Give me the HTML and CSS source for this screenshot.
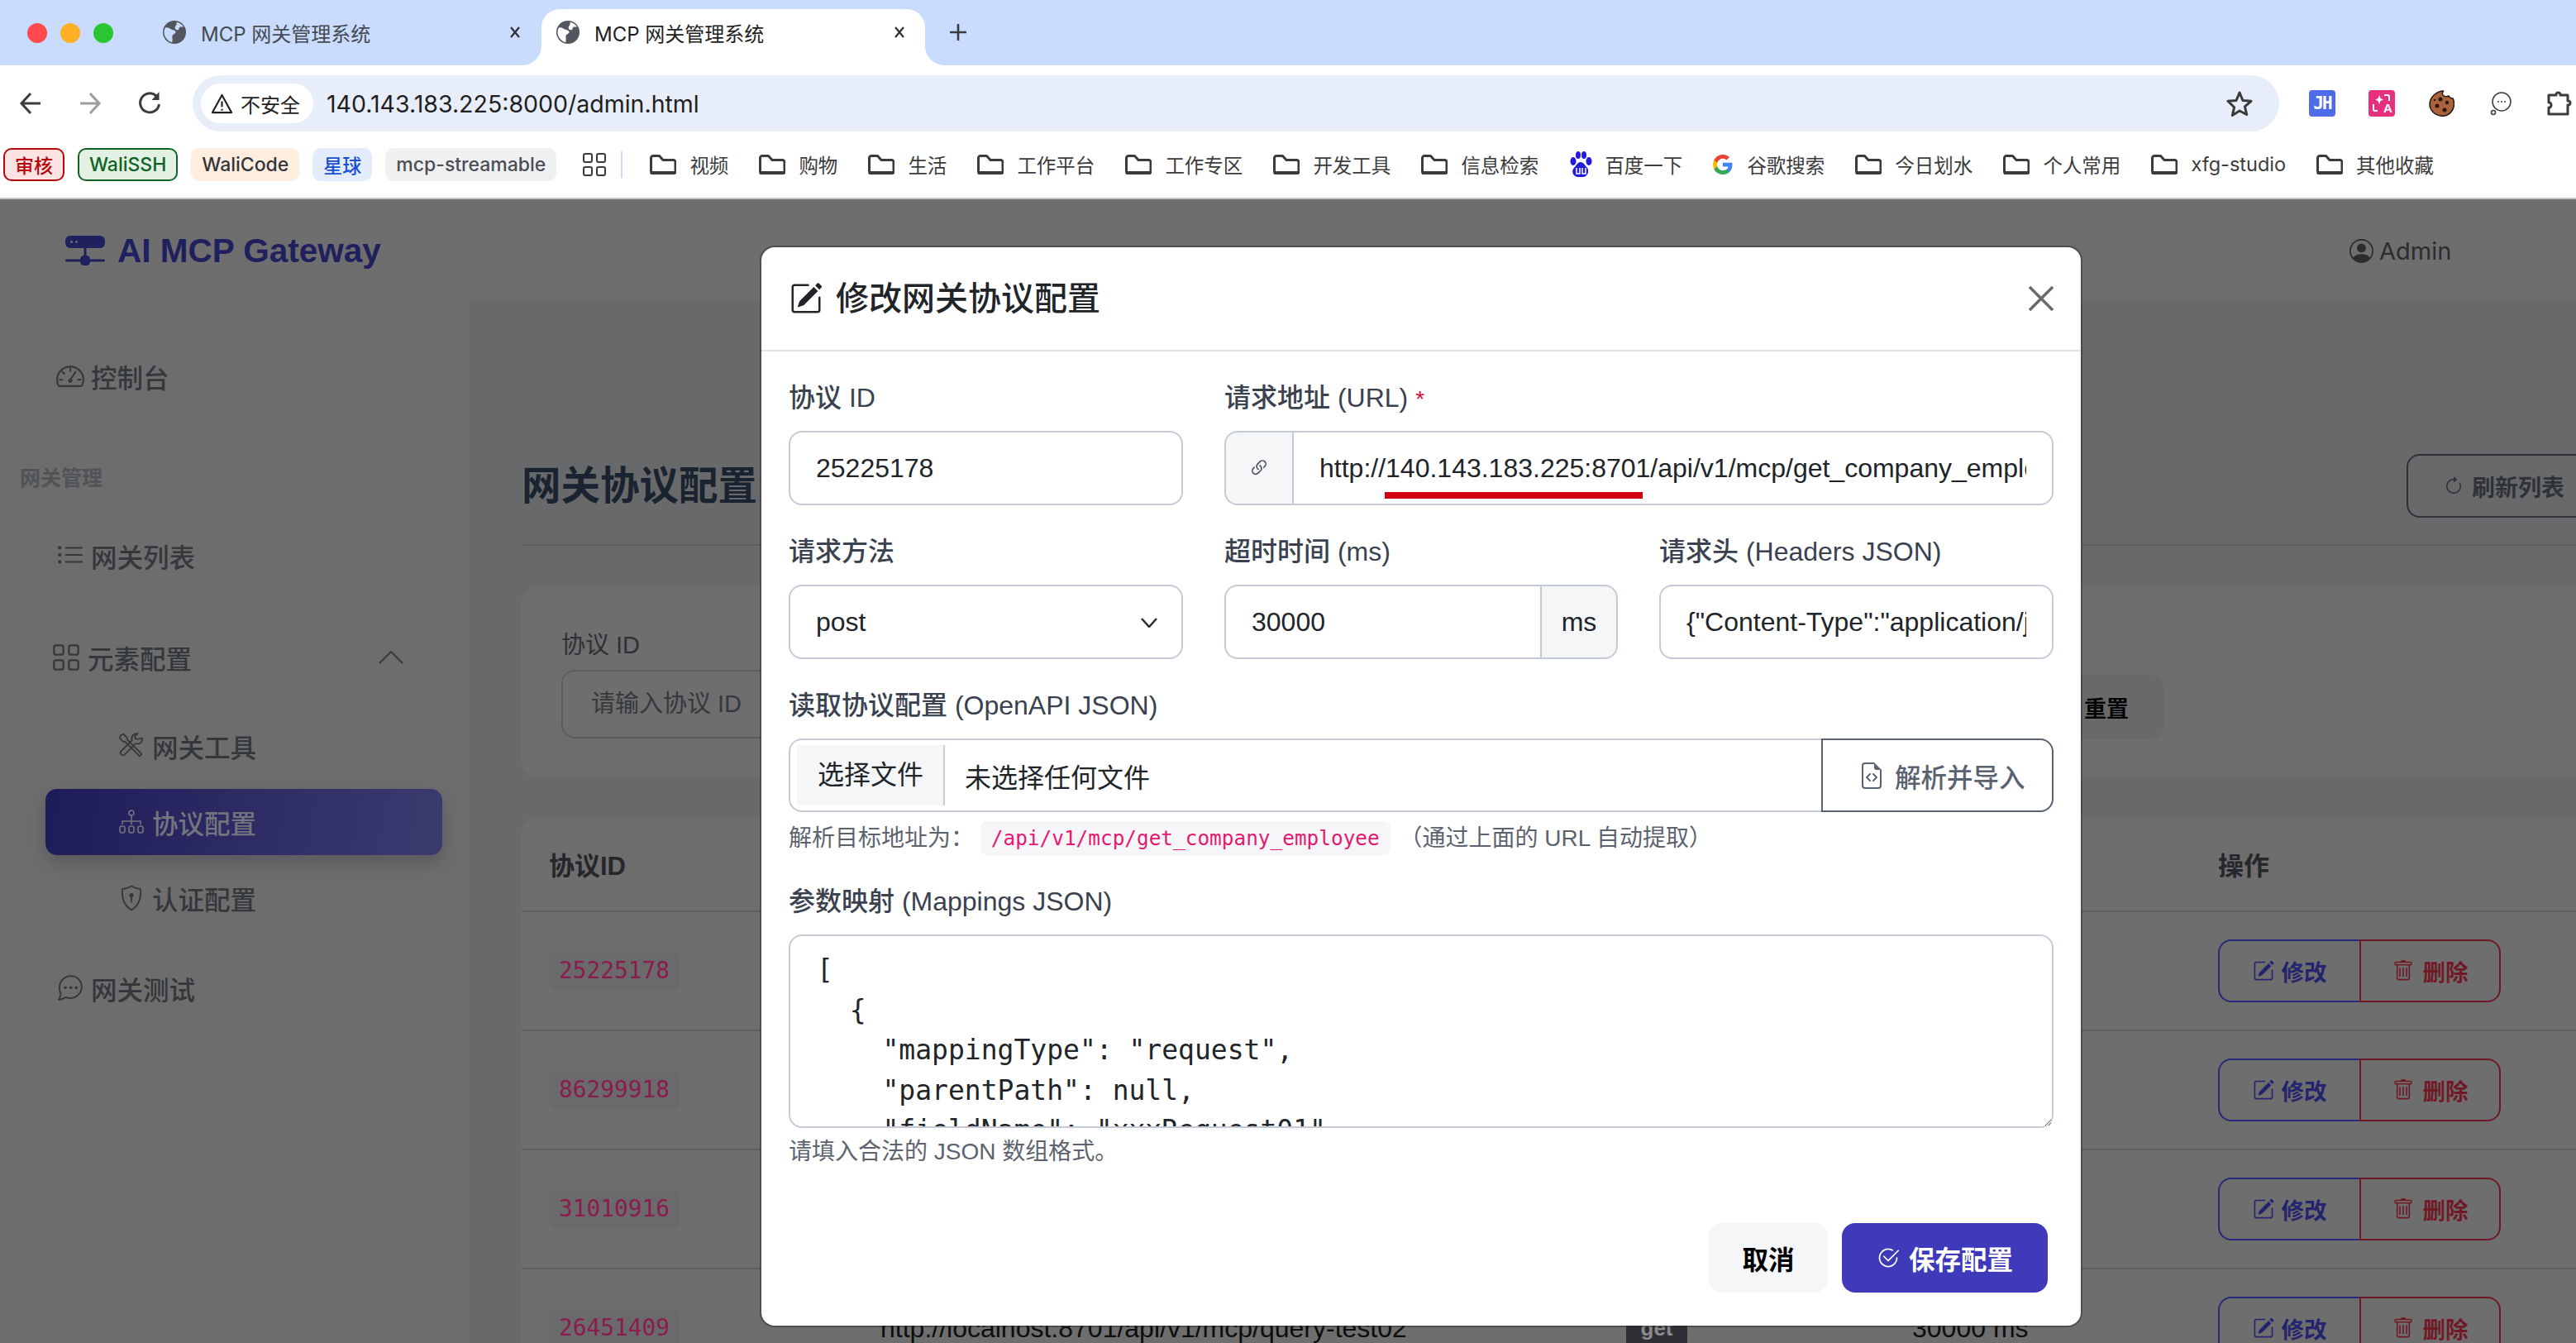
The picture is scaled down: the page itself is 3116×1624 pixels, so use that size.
FILE: index.html
```html
<!DOCTYPE html>
<html lang="zh-CN">
<head>
<meta charset="utf-8">
<title>MCP 网关管理系统</title>
<link rel="stylesheet" href="styles.css">
</head>
<body>
<svg class="defs" width="0" height="0" aria-hidden="true">
  <symbol id="i-pencil" viewBox="0 0 16 16"><path d="M15.502 1.94a.5.5 0 0 1 0 .706L14.459 3.69l-2-2L13.502.646a.5.5 0 0 1 .707 0l1.293 1.293zm-1.75 2.456-2-2L4.939 9.21a.5.5 0 0 0-.121.196l-.805 2.414a.25.25 0 0 0 .316.316l2.414-.805a.5.5 0 0 0 .196-.12l6.813-6.814z"/><path fill-rule="evenodd" d="M1 13.5A1.5 1.5 0 0 0 2.5 15h11a1.5 1.5 0 0 0 1.5-1.5v-6a.5.5 0 0 0-1 0v6a.5.5 0 0 1-.5.5h-11a.5.5 0 0 1-.5-.5v-11a.5.5 0 0 1 .5-.5H9a.5.5 0 0 0 0-1H2.5A1.5 1.5 0 0 0 1 2.5v11z"/></symbol>
  <symbol id="i-trash" viewBox="0 0 16 16"><path d="M5.5 5.5A.5.5 0 0 1 6 6v6a.5.5 0 0 1-1 0V6a.5.5 0 0 1 .5-.5zm2.5 0a.5.5 0 0 1 .5.5v6a.5.5 0 0 1-1 0V6a.5.5 0 0 1 .5-.5zm3 .5a.5.5 0 0 0-1 0v6a.5.5 0 0 0 1 0V6z"/><path fill-rule="evenodd" d="M14.5 3a1 1 0 0 1-1 1H13v9a2 2 0 0 1-2 2H5a2 2 0 0 1-2-2V4h-.5a1 1 0 0 1-1-1V2a1 1 0 0 1 1-1H6a1 1 0 0 1 1-1h2a1 1 0 0 1 1 1h3.5a1 1 0 0 1 1 1v1zM4.118 4 4 4.059V13a1 1 0 0 0 1 1h6a1 1 0 0 0 1-1V4.059L11.882 4H4.118zM2.5 3V2h11v1h-11z"/></symbol>
  <symbol id="i-check" viewBox="0 0 16 16"><path d="M2.5 8a5.5 5.5 0 0 1 8.25-4.764.5.5 0 0 0 .5-.866A6.5 6.5 0 1 0 14.5 8a.5.5 0 0 0-1 0 5.5 5.5 0 1 1-11 0z"/><path d="M15.354 3.354a.5.5 0 0 0-.708-.708L8 9.293 5.354 6.646a.5.5 0 1 0-.708.708l3 3a.5.5 0 0 0 .708 0l7-7z"/></symbol>
  <symbol id="i-refresh" viewBox="0 0 16 16"><path fill-rule="evenodd" d="M8 3a5 5 0 1 0 4.546 2.914.5.5 0 0 1 .908-.417A6 6 0 1 1 8 2v1z"/><path d="M8 4.466V.534a.25.25 0 0 1 .41-.192l2.36 1.966c.12.1.12.284 0 .384L8.41 4.658A.25.25 0 0 1 8 4.466z"/></symbol>
  <symbol id="i-person" viewBox="0 0 16 16"><path d="M11 6a3 3 0 1 1-6 0 3 3 0 0 1 6 0z"/><path fill-rule="evenodd" d="M0 8a8 8 0 1 1 16 0A8 8 0 0 1 0 8zm8-7a7 7 0 0 0-5.468 11.37C3.242 11.226 4.805 10 8 10s4.757 1.225 5.468 2.37A7 7 0 0 0 8 1z"/></symbol>
  <symbol id="i-list" viewBox="0 0 16 16"><path fill-rule="evenodd" d="M5 11.5a.5.5 0 0 1 .5-.5h9a.5.5 0 0 1 0 1h-9a.5.5 0 0 1-.5-.5zm0-4a.5.5 0 0 1 .5-.5h9a.5.5 0 0 1 0 1h-9a.5.5 0 0 1-.5-.5zm0-4a.5.5 0 0 1 .5-.5h9a.5.5 0 0 1 0 1h-9a.5.5 0 0 1-.5-.5zm-3 1a1 1 0 1 0 0-2 1 1 0 0 0 0 2zm0 4a1 1 0 1 0 0-2 1 1 0 0 0 0 2zm0 4a1 1 0 1 0 0-2 1 1 0 0 0 0 2z"/></symbol>
  <symbol id="i-grid" viewBox="0 0 16 16"><path d="M1 2.500A1.500 1.500 0 0 1 2.500 1h3A1.500 1.500 0 0 1 7 2.500v3A1.500 1.500 0 0 1 5.500 7h-3A1.500 1.500 0 0 1 1 5.500v-3zM2.500 2a.5.5 0 0 0-.5.5v3a.5.5 0 0 0 .5.5h3a.5.5 0 0 0 .5-.5v-3a.5.5 0 0 0-.5-.5h-3zm6.500.5A1.500 1.500 0 0 1 10.500 1h3A1.500 1.500 0 0 1 15 2.500v3A1.500 1.500 0 0 1 13.500 7h-3A1.500 1.500 0 0 1 9 5.500v-3zm1.500-.5a.5.5 0 0 0-.5.5v3a.5.5 0 0 0 .5.5h3a.5.5 0 0 0 .5-.5v-3a.5.5 0 0 0-.5-.5h-3zM1 10.500A1.500 1.500 0 0 1 2.500 9h3A1.500 1.500 0 0 1 7 10.500v3A1.500 1.500 0 0 1 5.500 15h-3A1.500 1.500 0 0 1 1 13.500v-3zm1.500-.5a.5.5 0 0 0-.5.5v3a.5.5 0 0 0 .5.5h3a.5.5 0 0 0 .5-.5v-3a.5.5 0 0 0-.5-.5h-3zm6.500.5A1.500 1.500 0 0 1 10.500 9h3a1.500 1.500 0 0 1 1.500 1.500v3a1.500 1.500 0 0 1-1.500 1.500h-3A1.500 1.500 0 0 1 9 13.500v-3zm1.500-.5a.5.5 0 0 0-.5.5v3a.5.5 0 0 0 .5.5h3a.5.5 0 0 0 .5-.5v-3a.5.5 0 0 0-.5-.5h-3z"/></symbol>
  <symbol id="i-link" viewBox="0 0 16 16"><path d="M4.715 6.542 3.343 7.914a3 3 0 1 0 4.243 4.243l1.828-1.829A3 3 0 0 0 8.586 5.500L8 6.086a1.002 1.002 0 0 0-.154.199 2 2 0 0 1 .861 3.337L6.880 11.450a2 2 0 1 1-2.830-2.830l.793-.792a4.018 4.018 0 0 1-.128-1.287z"/><path d="M6.586 4.672A3 3 0 0 0 7.414 9.500l.775-.776a2 2 0 0 1-.896-3.346L9.120 3.550a2 2 0 1 1 2.830 2.830l-.793.792c.112.420.155.855.128 1.287l1.372-1.372a3 3 0 1 0-4.243-4.243L6.586 4.672z"/></symbol>
  <symbol id="i-file" viewBox="0 0 16 16"><path d="M14 4.500V14a2 2 0 0 1-2 2H4a2 2 0 0 1-2-2V2a2 2 0 0 1 2-2h5.500L14 4.500zm-3 0A1.500 1.500 0 0 1 9.500 3V1H4a1 1 0 0 0-1 1v12a1 1 0 0 0 1 1h8a1 1 0 0 0 1-1V4.500h-2z"/><path d="M8.646 6.646a.5.5 0 0 1 .708 0l2 2a.5.5 0 0 1 0 .708l-2 2a.5.5 0 0 1-.708-.708L10.293 9 8.646 7.354a.5.5 0 0 1 0-.708zm-1.292 0a.5.5 0 0 0-.708 0l-2 2a.5.5 0 0 0 0 .708l2 2a.5.5 0 0 0 .708-.708L5.707 9l1.647-1.646a.5.5 0 0 0 0-.708z"/></symbol>
  <symbol id="i-logo" viewBox="0 0 16 16"><path d="M2 2a2 2 0 0 0-2 2v1a2 2 0 0 0 2 2h5.500v3A1.500 1.500 0 0 0 6 11.500H.5a.5.5 0 0 0 0 1H6A1.500 1.500 0 0 0 7.500 14h1a1.500 1.500 0 0 0 1.500-1.500h5.500a.5.5 0 0 0 0-1H10A1.500 1.500 0 0 0 8.500 10V7H14a2 2 0 0 0 2-2V4a2 2 0 0 0-2-2H2zm.5 3a.5.5 0 1 1 0-1 .5.5 0 0 1 0 1zm2 0a.5.5 0 1 1 0-1 .5.5 0 0 1 0 1z"/></symbol>
  <symbol id="i-speed" viewBox="0 0 16 16"><path d="M8 2.500a7.500 7.500 0 0 0-7.500 7.500c0 1.200.3 2.300.8 3.200.2.300.5.400.8.400h11.800c.3 0 .6-.1.8-.4.500-.9.800-2 .8-3.200A7.500 7.500 0 0 0 8 2.500z" fill="none" stroke="currentColor"/><path d="M8 10l3-4.500M8 3.500v1.500M3.500 5.500l1 1M2 10h1.500M12.500 10H14" fill="none" stroke="currentColor" stroke-linecap="round"/><circle cx="8" cy="10.500" r="1.200"/></symbol>
  <symbol id="i-tools" viewBox="0 0 16 16"><path d="M1.500 1.500l1.800-.6 2 2 .2 1.300 8.700 8.700-1.300 1.300-8.700-8.700-1.300-.2-2-2z" fill="none" stroke="currentColor" stroke-width=".9" stroke-linejoin="round"/><path d="M14.500 3.300a3 3 0 0 1-4 3.300L3.800 13.300a1.500 1.500 0 0 1-2.100-2.100L8.400 4.500a3 3 0 0 1 3.300-4L10 2.200l.4 1.400 1.400.4z" fill="none" stroke="currentColor" stroke-width=".9" stroke-linejoin="round"/></symbol>
  <symbol id="i-diagram" viewBox="0 0 16 16"><rect x="6.500" y="1" width="3" height="3" rx="1.500" fill="none" stroke="currentColor" stroke-width=".8"/><path d="M8 4v3M2.500 9.500V7.500h11v2M8 7.500v2" fill="none" stroke="currentColor" stroke-width=".8"/><rect x="1" y="10.500" width="3" height="4" rx="1.200" fill="none" stroke="currentColor" stroke-width=".8"/><rect x="6.500" y="10.500" width="3" height="4" rx="1.200" fill="none" stroke="currentColor" stroke-width=".8"/><rect x="12" y="10.500" width="3" height="4" rx="1.200" fill="none" stroke="currentColor" stroke-width=".8"/></symbol>
  <symbol id="i-shield" viewBox="0 0 16 16"><path d="M8 .8c1.800 1.100 3.600 1.600 5.500 1.800 .4 5-1 9.800-5.500 12.600C3.500 12.400 2.100 7.600 2.500 2.600 4.400 2.400 6.200 1.900 8 .8z" fill="none" stroke="currentColor" stroke-width=".9" stroke-linejoin="round"/><circle cx="8" cy="6.300" r="1.300"/><path d="M8 7v3.200" stroke="currentColor" stroke-width=".9" stroke-linecap="round"/></symbol>
  <symbol id="i-chat" viewBox="0 0 16 16"><path d="M8.500 1a6.700 6.700 0 0 0-6.700 6.700c0 1 .2 2 .7 2.900.3.500-.2 2.900-1.200 4 1.800-.1 3-.8 4.100-1.500 1 .4 2 .6 3.100.5a6.400 6.400 0 0 0 6-6.300A6.200 6.200 0 0 0 8.500 1z" fill="none" stroke="currentColor" stroke-width=".9" stroke-linejoin="round"/><circle cx="5.200" cy="7.700" r=".85"/><circle cx="8.300" cy="7.700" r=".85"/><circle cx="11.400" cy="7.700" r=".85"/></symbol>
  <symbol id="i-folder" viewBox="0 0 32 24"><path d="M1.500 4A2.500 2.500 0 0 1 4 1.500h7.500l4.500 5h12.500A2.500 2.500 0 0 1 31 9v11.500a2.500 2.500 0 0 1-2.500 2.500H4a2.500 2.500 0 0 1-2.500-2.500z" fill="none" stroke="currentColor" stroke-width="3" stroke-linejoin="round"/><path d="M2 20h28v3H2z"/></symbol>
  <symbol id="i-globe" viewBox="0 0 28 28"><circle cx="14" cy="14" r="14" fill="#51565f"/><path class="globe-land" d="M3 8.500c3-1 5 .6 7 1.800s5 1 5.500 3.200-3.500 2.500-4 4.800 .8 4-.3 8C5.500 24.500 1.500 19.500 1.500 14c0-2 .5-3.800 1.500-5.500z"/><path class="globe-land" d="M16.500 1.800c3.500.7 6.500 2.500 8.500 5.400-2.300.9-3.400-.2-4.700.8s-.3 3.300-2.500 3.300-3.400-1.300-3.100-3.300 2.800-2.600 1.800-6.200z"/></symbol>
</svg>

<div class="chrome">
  <div class="tabstrip">
    <div class="lights"><span class="light light-red"></span><span class="light light-amber"></span><span class="light light-green"></span></div>
    <div class="tab">
      <svg class="favicon"><use href="#i-globe"/></svg>
      <span class="tab-title">MCP 网关管理系统</span>
      <svg class="tab-close" viewBox="0 0 14 14"><path d="M2 1l10 12M12 1L2 13"/></svg>
    </div>
    <div class="tab tab-active">
      <svg class="favicon"><use href="#i-globe"/></svg>
      <span class="tab-title">MCP 网关管理系统</span>
      <svg class="tab-close" viewBox="0 0 14 14"><path d="M2 1l10 12M12 1L2 13"/></svg>
    </div>
    <svg class="tab-new" viewBox="0 0 22 22"><path d="M11 1v20M1 11h20"/></svg>
  </div>

  <div class="toolbar">
    <svg class="nav-btn" viewBox="0 0 28 32"><path d="M26 16H4M14 4L3 16l11 12"/></svg>
    <svg class="nav-btn nav-btn-off" viewBox="0 0 28 32"><path d="M2 16h22M14 4l11 12-11 12"/></svg>
    <svg class="nav-btn" viewBox="0 0 28 32"><path d="M22 7a11.500 11.500 0 1 0 3.500 10"/><path class="solid" d="M25.500 2v10h-9z"/></svg>
    <div class="omnibox">
      <div class="secure-chip">
        <svg class="warn" viewBox="0 0 28 28"><path d="M14 3l12 22H2z"/><path d="M14 11v7M14 20.500v2"/></svg>
        <span>不安全</span>
      </div>
      <span class="url-text">140.143.183.225:8000/admin.html</span>
      <svg class="star" viewBox="0 0 32 32"><path d="M16 3l4 9.500 10 .8-7.600 6.500 2.300 9.700L16 25l-8.700 5.500 2.300-9.700L2 13.300l10-.8z"/></svg>
    </div>
    <div class="extensions">
      <span class="ext ext-jh">JH</span>
      <svg class="ext" viewBox="0 0 32 32"><rect width="32" height="32" rx="4" fill="#e6307f"/><path d="M13 6l1.500 4L18 11.500 14.500 13 13 17l-1.500-4L8 11.500 11.500 10z" fill="#fff"/><path d="M6 17v6a2 2 0 0 0 2 2h3M19 6h4a2 2 0 0 1 2 2v5" fill="none" stroke="#fff" stroke-width="2"/><text class="ext-a" x="18" y="27">A</text></svg>
      <svg class="ext" viewBox="0 0 32 32"><path d="M19 1c-2 1-2 3-1 5 2 2 5 2 7 1 1 2 3 3 5 3 2 4 2 10-1 15-3 5-9 7-14 6C8 30 2 24 2 17 2 9 10 1 19 1z" fill="#a9623a" stroke="#241a12" stroke-width="1.500"/><circle cx="15" cy="11" r="2.500" fill="#241a12"/><circle cx="23" cy="15" r="2.200" fill="#241a12"/><circle cx="11" cy="19" r="2.500" fill="#241a12"/><circle cx="20" cy="24" r="2.500" fill="#241a12"/><circle cx="8" cy="12" r="1.200" fill="#241a12"/></svg>
      <svg class="ext" viewBox="0 0 32 32"><circle cx="17" cy="14" r="11" fill="none" stroke="#3c3c3c" stroke-width="1.500"/><circle cx="7" cy="27" r="2.500" fill="none" stroke="#3c3c3c" stroke-width="1.500"/><circle cx="13" cy="14" r="1" fill="#3c3c3c"/><circle cx="17" cy="14" r="1" fill="#3c3c3c"/><circle cx="21" cy="14" r="1" fill="#3c3c3c"/></svg>
      <svg class="ext" viewBox="0 0 32 32"><path d="M2 6h9c-1-4 6-4 5 0h9v7c4-1 4 6 0 5v11H2v-8c4 1 4-7 0-6z" fill="none" stroke="#3c3c3c" stroke-width="3" stroke-linejoin="round"/></svg>
    </div>
  </div>

  <div class="bookmarks">
    <span class="chip chip-red">审核</span>
    <span class="chip chip-green">WaliSSH</span>
    <span class="chip chip-orange">WaliCode</span>
    <span class="chip chip-blue">星球</span>
    <span class="chip chip-gray">mcp-streamable</span>
    <svg class="apps"><use href="#i-grid"/></svg>
    <span class="bm-divider"></span>
    <span class="bm"><svg class="folder"><use href="#i-folder"/></svg>视频</span>
    <span class="bm"><svg class="folder"><use href="#i-folder"/></svg>购物</span>
    <span class="bm"><svg class="folder"><use href="#i-folder"/></svg>生活</span>
    <span class="bm"><svg class="folder"><use href="#i-folder"/></svg>工作平台</span>
    <span class="bm"><svg class="folder"><use href="#i-folder"/></svg>工作专区</span>
    <span class="bm"><svg class="folder"><use href="#i-folder"/></svg>开发工具</span>
    <span class="bm"><svg class="folder"><use href="#i-folder"/></svg>信息检索</span>
    <span class="bm"><svg class="paw" viewBox="0 0 28 32"><ellipse cx="5" cy="12" rx="3.500" ry="5" fill="#2319dc"/><ellipse cx="11" cy="4.500" rx="3" ry="4.500" fill="#2319dc"/><ellipse cx="18" cy="4.500" rx="3" ry="4.500" fill="#2319dc"/><ellipse cx="24" cy="12" rx="3.500" ry="5" fill="#2319dc"/><path d="M14 13c4 0 5 4 8 7 3 4 0 11-5 11h-6c-6 0-9-7-5-11 3-3 4-7 8-7z" fill="#2319dc"/><path d="M9 20v7h4v-7M16 20v7h4v-7" fill="none" stroke="#fff" stroke-width="1.500"/></svg>百度一下</span>
    <span class="bm"><svg class="gicon" viewBox="0 0 24 24"><path d="M23.500 12.300c0-.9-.1-1.700-.2-2.500H12v4.700h6.500c-.3 1.500-1.100 2.800-2.400 3.600v3h3.900c2.300-2.100 3.500-5.200 3.500-8.800z" fill="#4285f4"/><path d="M12 24c3.200 0 6-1.100 8-2.900l-3.900-3c-1.100.7-2.500 1.200-4.100 1.200-3.100 0-5.800-2.100-6.700-5H1.300v3.100C3.300 21.300 7.300 24 12 24z" fill="#34a853"/><path d="M5.300 14.300c-.5-1.500-.5-3.100 0-4.600V6.600h-4c-1.700 3.300-1.700 7.500 0 10.800z" fill="#fbbc05"/><path d="M12 4.700c1.800 0 3.300.6 4.600 1.800l3.400-3.400C17.900 1.200 15.200 0 12 0 7.300 0 3.300 2.700 1.300 6.600l4 3.100c.9-2.900 3.600-5 6.700-5z" fill="#ea4335"/></svg>谷歌搜索</span>
    <span class="bm"><svg class="folder"><use href="#i-folder"/></svg>今日划水</span>
    <span class="bm"><svg class="folder"><use href="#i-folder"/></svg>个人常用</span>
    <span class="bm"><svg class="folder"><use href="#i-folder"/></svg>xfg-studio</span>
    <span class="bm"><svg class="folder"><use href="#i-folder"/></svg>其他收藏</span>
  </div>
</div>

<div class="page">
  <header class="topnav">
    <div class="brand"><svg class="brand-icon"><use href="#i-logo"/></svg><span>AI MCP Gateway</span></div>
    <div class="user"><svg class="user-icon"><use href="#i-person"/></svg><span>Admin</span></div>
  </header>

  <div class="workspace">
    <aside class="sidebar">
      <a class="side-item side-dash"><svg class="side-icon"><use href="#i-speed"/></svg>控制台</a>
      <div class="side-heading">网关管理</div>
      <a class="side-item side-list"><svg class="side-icon"><use href="#i-list"/></svg>网关列表</a>
      <a class="side-item side-group"><svg class="side-icon side-icon-lg"><use href="#i-grid"/></svg>元素配置
        <svg class="side-chevron" viewBox="0 0 30 16"><path d="M1 15L15 1l14 14"/></svg></a>
      <a class="side-sub side-sub-first"><svg class="sub-icon"><use href="#i-tools"/></svg>网关工具</a>
      <a class="side-sub side-active"><svg class="sub-icon"><use href="#i-diagram"/></svg>协议配置</a>
      <a class="side-sub"><svg class="sub-icon"><use href="#i-shield"/></svg>认证配置</a>
      <a class="side-item side-test"><svg class="side-icon"><use href="#i-chat"/></svg>网关测试</a>
    </aside>

    <main class="main">
      <div class="page-head">
        <h1 class="page-title">网关协议配置</h1>
        <button class="refresh-btn"><svg class="refresh-icon"><use href="#i-refresh"/></svg>刷新列表</button>
      </div>

      <section class="filter-card">
        <div class="filter-field">
          <label class="filter-label">协议 ID</label>
          <div class="filter-input">请输入协议 ID</div>
        </div>
        <button class="reset-btn">重置</button>
      </section>

      <section class="table-card">
        <div class="row row-head">
          <div>协议ID</div><div></div><div></div><div></div><div>操作</div>
        </div>
        <div class="row">
          <div><code class="id-code">25225178</code></div><div></div><div></div><div></div>
          <div class="actions"><button class="act act-edit"><svg class="act-icon"><use href="#i-pencil"/></svg>修改</button><button class="act act-del"><svg class="act-icon"><use href="#i-trash"/></svg>删除</button></div>
        </div>
        <div class="row">
          <div><code class="id-code">86299918</code></div><div></div><div></div><div></div>
          <div class="actions"><button class="act act-edit"><svg class="act-icon"><use href="#i-pencil"/></svg>修改</button><button class="act act-del"><svg class="act-icon"><use href="#i-trash"/></svg>删除</button></div>
        </div>
        <div class="row">
          <div><code class="id-code">31010916</code></div><div></div><div></div><div></div>
          <div class="actions"><button class="act act-edit"><svg class="act-icon"><use href="#i-pencil"/></svg>修改</button><button class="act act-del"><svg class="act-icon"><use href="#i-trash"/></svg>删除</button></div>
        </div>
        <div class="row">
          <div><code class="id-code">26451409</code></div>
          <div class="cell-text">http://localhost:8701/api/v1/mcp/query-test02</div>
          <div><span class="badge">get</span></div>
          <div class="cell-text">30000 ms</div>
          <div class="actions"><button class="act act-edit"><svg class="act-icon"><use href="#i-pencil"/></svg>修改</button><button class="act act-del"><svg class="act-icon"><use href="#i-trash"/></svg>删除</button></div>
        </div>
      </section>
    </main>
  </div>

  <div class="modal">
    <div class="modal-head">
      <svg class="modal-icon"><use href="#i-pencil"/></svg>
      <h2 class="modal-title">修改网关协议配置</h2>
      <svg class="modal-close" viewBox="0 0 32 32"><path d="M2 2l28 28M30 2L2 30"/></svg>
    </div>
    <div class="modal-body">
      <div class="form-grid">
        <div class="field">
          <label class="label">协议 ID</label>
          <input class="input" value="25225178">
        </div>
        <div class="field field-wide">
          <label class="label">请求地址 (URL) <span class="req">*</span></label>
          <div class="group group-url">
            <span class="addon addon-link"><svg class="link-icon"><use href="#i-link"/></svg></span>
            <input class="input input-grouped" value="http://140.143.183.225:8701/api/v1/mcp/get_company_employee">
            <span class="annotation"></span>
          </div>
        </div>
        <div class="field">
          <label class="label">请求方法</label>
          <div class="select-wrap">
            <select class="input select"><option>post</option></select>
            <svg class="select-chevron" viewBox="0 0 20 12"><path d="M1 1l9 10 9-10"/></svg>
          </div>
        </div>
        <div class="field">
          <label class="label">超时时间 (ms)</label>
          <div class="group">
            <input class="input input-grouped input-timeout" value="30000">
            <span class="addon addon-ms">ms</span>
          </div>
        </div>
        <div class="field">
          <label class="label">请求头 (Headers JSON)</label>
          <input class="input" value='{"Content-Type":"application/json"}'>
        </div>
      </div>

      <label class="label label-block">读取协议配置 (OpenAPI JSON)</label>
      <div class="file-group">
        <div class="file-main">
          <span class="file-btn">选择文件</span>
          <span class="file-name">未选择任何文件</span>
        </div>
        <button class="parse-btn"><svg class="parse-icon"><use href="#i-file"/></svg>解析并导入</button>
      </div>
      <p class="hint hint-code">解析目标地址为： <code class="path-code">/api/v1/mcp/get_company_employee</code> （通过上面的 URL 自动提取）</p>

      <label class="label label-block">参数映射 (Mappings JSON)</label>
      <textarea class="json-area" spellcheck="false">[
  {
    "mappingType": "request",
    "parentPath": null,
    "fieldName": "xxxRequest01"
  }
]</textarea>
      <p class="hint hint-help">请填入合法的 JSON 数组格式。</p>
    </div>
    <div class="modal-foot">
      <button class="btn-cancel">取消</button>
      <button class="btn-save"><svg class="save-icon"><use href="#i-check"/></svg>保存配置</button>
    </div>
  </div>
</div>
</body>
</html>
```

FILE: styles.css
```css
* { box-sizing: border-box; }
html, body { margin: 0; height: 100%; }
body {
  width: 3116px;
  height: 1624px;
  overflow: hidden;
  display: flex;
  flex-direction: column;
  background: #6e6e6e;
  font-family: "Liberation Sans", "Noto Sans CJK SC", sans-serif;
}
button { font-family: inherit; cursor: pointer; }
.defs { position: absolute; }
svg { flex: none; fill: currentColor; }

/* ---- browser chrome ---- */
.chrome { flex: none; background: #fff; font-family: Inter, "Noto Sans CJK SC", sans-serif; }
.tabstrip {
  height: 79px;
  background: #c9dcfd;
  display: flex;
  align-items: flex-end;
}
.lights { display: flex; gap: 16px; padding: 0 36px 0 33px; height: 79px; align-items: center; }
.light { width: 24px; height: 24px; border-radius: 50%; }
.light-red { background: #ff4a4e; }
.light-amber { background: #fdb024; }
.light-green { background: #28c62f; }
.tab {
  width: 482px;
  height: 68px;
  padding: 0 25px 12px 24px;
  display: flex;
  align-items: center;
  color: #454a52;
  --land: #c9dcfd;
}
.tab-active {
  position: relative;
  width: 464px;
  padding-left: 18px;
  padding-right: 24px;
  background: #fff;
  border-radius: 22px 22px 0 0;
  color: #1f1f1f;
  --land: #fff;
}
.tab-active::before, .tab-active::after {
  content: "";
  position: absolute;
  bottom: 0;
  width: 23px;
  height: 23px;
}
.tab-active::before { left: -23px; background: radial-gradient(circle at 0 0, transparent 22.500px, #fff 23px); }
.tab-active::after { right: -23px; background: radial-gradient(circle at 100% 0, transparent 22.500px, #fff 23px); }
.favicon { width: 28px; height: 28px; }
.globe-land { fill: var(--land, #fff); }
.tab-title { margin-left: 18px; font-size: 24px; white-space: nowrap; flex: 1; }
.tab-close { width: 14px; height: 14px; fill: none; stroke: #2d2f33; stroke-width: 2.200; }
.tab-new { width: 22px; height: 22px; margin: 0 0 29px 29px; fill: none; stroke: #3a3c40; stroke-width: 2.600; }

.toolbar { height: 81px; padding: 12px 0 1px 23px; display: flex; align-items: center; }
.nav-btn { width: 28px; height: 32px; margin-right: 44px; fill: none; stroke: #3c3c3c; stroke-width: 3; }
.nav-btn .solid { fill: #3c3c3c; stroke: none; }
.nav-btn-off { stroke: #9d9d9d; }
.omnibox {
  width: 2524px;
  height: 68px;
  margin-left: -6px;
  padding: 0 32px 0 10px;
  border-radius: 34px;
  background: #e7eef9;
  display: flex;
  align-items: center;
}
.secure-chip {
  width: 136px;
  height: 48px;
  padding-left: 12px;
  border-radius: 24px;
  background: #fff;
  display: flex;
  align-items: center;
  gap: 9px;
  font-size: 24px;
  color: #1f1f1f;
}
.warn { width: 27px; height: 27px; fill: none; stroke: #1f1f1f; stroke-width: 2.200; stroke-linejoin: round; }
.url-text { margin-left: 16px; font-size: 28.500px; color: #1f1f1f; flex: 1; white-space: nowrap; }
.star { width: 32px; height: 32px; fill: none; stroke: #3a3a3a; stroke-width: 3; stroke-linejoin: round; }
.extensions { margin-left: 36px; display: flex; gap: 40px; align-items: center; }
.ext { width: 32px; height: 32px; }
.ext-jh {
  border-radius: 4px;
  background: #4f6ce8;
  color: #fff;
  font: 700 21px/32px "DejaVu Sans Mono", monospace;
  text-align: center;
  letter-spacing: -2px;
}
.ext-a { font: 700 15px "Liberation Sans", sans-serif; fill: #fff; }

.bookmarks {
  height: 81px;
  padding: 0 0 2px 4px;
  border-bottom: 2px solid #c7c7c7;
  display: flex;
  align-items: center;
  font-size: 23.500px;
  color: #3c3c3c;
  white-space: nowrap;
}
.chip {
  height: 40px;
  margin-right: 16px;
  padding: 0 13px;
  border-radius: 10px;
  display: flex;
  align-items: center;
  font-size: 23px;
  font-weight: 500;
}
.chip-red { background: #fde2e2; color: #b8060e; border: 2px solid #b8060e; padding: 0 12px; }
.chip-green { background: #e2f1e4; color: #0f6322; border: 2px solid #0f6322; padding: 0 12px; }
.chip-orange { background: #ffeee0; color: #33343a; }
.chip-blue { background: #e2ecfd; color: #1850d4; padding: 0 13px; }
.chip-gray { background: #eff0f2; color: #4b4c55; }
.apps { width: 32px; height: 32px; margin: 0 16px 0 14px; color: #3a3a3a; }
.bm-divider { width: 2px; height: 32px; margin-right: 33px; background: #c9dcfd; }
.bm { display: flex; align-items: center; margin-right: 37px; }
.folder { width: 32px; height: 24px; margin-right: 16px; color: #3b3b3b; }
.paw { width: 28px; height: 32px; margin-right: 15px; }
.gicon { width: 24px; height: 24px; margin-right: 17px; }

/* ---- dimmed application behind the dialog ---- */
.page { flex: 1; min-height: 0; width: 3300px; position: relative; display: flex; flex-direction: column; }
.topnav {
  flex: none;
  height: 124px;
  padding: 0 158px 0 79px;
  background: #6e6e6e;
  display: flex;
  justify-content: space-between;
  align-items: center;
}
.brand { display: flex; align-items: center; gap: 15px; color: #20205f; font-size: 40.500px; font-weight: 700; }
.brand-icon { width: 48px; height: 48px; }
.user { width: 300px; display: flex; align-items: center; gap: 7px; color: #2b2c2e; font-family: Inter, sans-serif; font-size: 29px; }
.user-icon { width: 29px; height: 29px; }

.workspace { flex: 1; min-height: 0; display: flex; }
.sidebar {
  flex: none;
  width: 568px;
  padding: 50px 33px 0 55px;
  background: #6d6d6d;
  color: #34373c;
  font-size: 31.500px;
  font-weight: 500;
  display: flex;
  flex-direction: column;
}
.side-item { height: 80px; padding-left: 13px; display: flex; align-items: center; gap: 8px; }
.side-icon { width: 34px; height: 34px; }
.side-icon-lg { width: 36px; height: 36px; margin-left: -6px; }
.side-heading { height: 30px; margin: 68px 0 39px -31px; font-size: 25px; line-height: 30px; font-weight: 700; color: #505357; }
.side-group { margin-top: 43px; padding-right: 47px; }
.side-chevron { width: 30px; height: 16px; margin-left: auto; fill: none; stroke: #34373c; stroke-width: 1.800; }
.side-sub { height: 80px; margin-top: 12px; padding-left: 88px; border-radius: 14px; display: flex; align-items: center; gap: 9px; }
.side-sub-first { margin-top: 27px; }
.sub-icon { width: 32px; height: 32px; }
.side-active {
  background: linear-gradient(100deg, #1d1c58, #3c3b70);
  color: #74747f;
  box-shadow: 0 10px 22px rgba(0, 0, 40, .18);
}
.side-test { margin-top: 29px; }

.main { flex: none; width: 2732px; padding-left: 63px; background: #68696b; }
.page-head {
  width: 2509px;
  height: 295px;
  padding: 184px 0 33px;
  border-bottom: 2px solid #5c5e61;
  display: flex;
  justify-content: space-between;
}
.page-title { margin: 0; font-size: 47.500px; line-height: 78px; font-weight: 700; color: #1a2430; }
.refresh-btn {
  width: 229px;
  height: 77px;
  padding: 0 0 0 43px;
  border: 2px solid #2f3237;
  border-radius: 16px;
  background: none;
  display: flex;
  align-items: center;
  gap: 10px;
  color: #2f3237;
  font-size: 28px;
  font-weight: 700;
}
.refresh-icon { width: 24px; height: 24px; }

.filter-card {
  width: 2509px;
  height: 233px;
  margin-top: 48px;
  padding: 52px 48px 0;
  border-radius: 20px;
  background: #6e6e6e;
  display: flex;
}
.filter-field { width: 600px; }
.filter-label { display: block; height: 50px; color: #2e3136; font-size: 29px; line-height: 40px; }
.filter-input {
  height: 83px;
  padding-left: 34px;
  border: 2px solid #5a5d63;
  border-radius: 16px;
  color: #35383d;
  font-size: 29px;
  line-height: 79px;
}
.reset-btn {
  width: 138px;
  height: 78px;
  margin: 56px 0 0 1200px;
  border: 0;
  border-radius: 16px;
  background: #696969;
  color: #050505;
  font-size: 27px;
  font-weight: 700;
}

.table-card { width: 2509px; margin-top: 46px; border-radius: 20px 20px 0 0; background: #6e6e6e; }
.row {
  height: 144px;
  padding-left: 33px;
  border-bottom: 2px solid #5c5f66;
  display: grid;
  grid-template-columns: 401px 902px 346px 370px 1fr;
  align-items: center;
}
.row-head { height: 116px; color: #25272a; font-size: 31px; font-weight: 700; }
.id-code {
  display: inline-block;
  width: 158px;
  height: 46px;
  border-radius: 8px;
  background: #6a6a6a;
  color: #8a1c50;
  font: 27.800px/46px "DejaVu Sans Mono", monospace;
  text-align: center;
}
.cell-text { color: #0d0d0d; font-size: 32px; white-space: nowrap; }
.badge {
  display: inline-block;
  width: 74px;
  height: 44px;
  border-radius: 6px;
  background: #2d2f34;
  color: #8a8a8c;
  font-size: 26px;
  font-weight: 700;
  line-height: 44px;
  text-align: center;
}
.actions { display: flex; }
.act {
  width: 171px;
  height: 76px;
  background: none;
  display: flex;
  align-items: center;
  justify-content: center;
  gap: 9px;
  font-size: 27.500px;
  font-weight: 700;
}
.act-edit { border: 2px solid #28287a; border-right: 0; border-radius: 16px 0 0 16px; color: #24246e; }
.act-del { border: 2px solid #6e1a26; border-radius: 0 16px 16px 0; color: #701a26; gap: 11px; }
.act-icon { width: 26px; height: 26px; }

/* ---- dialog ---- */
.modal {
  position: absolute;
  left: 921px;
  top: 58px;
  width: 1596px;
  height: 1304px;
  border-radius: 16px;
  background: #fff;
  box-shadow: 0 0 0 2px rgba(40, 40, 44, .45);
  display: flex;
  flex-direction: column;
}
.modal-head {
  flex: none;
  height: 126px;
  padding: 0 32px 0 34px;
  border-bottom: 2px solid #dee2e6;
  display: flex;
  align-items: center;
  color: #212529;
}
.modal-icon { width: 40px; height: 40px; }
.modal-title { margin: 0 0 0 16px; flex: 1; font-size: 40px; line-height: 56px; font-weight: 500; }
.modal-close { width: 32px; height: 32px; fill: none; stroke: #6a6a6a; stroke-width: 3.500; }
.modal-body { flex: 1; padding: 36px 33px 0; }
.form-grid { display: grid; grid-template-columns: 477px 476px 477px; column-gap: 50px; row-gap: 36px; }
.field-wide { grid-column: span 2; }
.label { display: block; height: 40px; margin-bottom: 20px; color: #3a4250; font-size: 32px; line-height: 40px; font-weight: 500; white-space: nowrap; }
.label-block { margin-top: 36px; }
.req { color: #dc143c; font-size: 28px; }
.input {
  width: 100%;
  height: 90px;
  padding: 0 31px;
  border: 2px solid #c5cbd6;
  border-radius: 16px;
  background: #fff;
  color: #212529;
  font-family: inherit;
  font-size: 32px;
  outline: none;
}
.group { display: flex; height: 90px; }
.group-url { position: relative; }
.input-grouped { flex: 1; min-width: 0; border-radius: 0 16px 16px 0; }
.input-timeout { border-radius: 16px 0 0 16px; border-right: 0; }
.addon {
  flex: none;
  border: 2px solid #c5cbd6;
  background: #f5f6f8;
  display: flex;
  align-items: center;
  justify-content: center;
  color: #212529;
  font-size: 32px;
}
.addon-link { width: 82px; border-right: 0; border-radius: 16px 0 0 16px; }
.addon-ms { width: 94px; border-radius: 0 16px 16px 0; }
.link-icon { width: 26px; height: 26px; color: #4a4f57; }
.annotation { position: absolute; left: 194px; top: 74px; width: 312px; height: 8px; background: #d0000f; }
.select-wrap { position: relative; }
.select { appearance: none; }
.select-chevron { position: absolute; right: 31px; top: 40px; width: 20px; height: 12px; fill: none; stroke: #2a2d33; stroke-width: 2.500; pointer-events: none; }

.file-group { display: flex; height: 89px; }
.file-main {
  flex: 1;
  padding: 7px 0 7px 8px;
  border: 2px solid #c5cbd6;
  border-right: 0;
  border-radius: 16px 0 0 16px;
  display: flex;
  align-items: center;
  color: #212529;
  font-size: 32px;
}
.file-btn {
  width: 179px;
  height: 73px;
  padding-left: 25px;
  border-right: 2px solid #c5cbd6;
  background: #f5f6f8;
  line-height: 72px;
}
.file-name { margin-left: 24px; }
.parse-btn {
  width: 281px;
  padding: 0 0 0 43px;
  border: 2px solid #596270;
  border-radius: 0 16px 16px 0;
  background: #fff;
  display: flex;
  align-items: center;
  gap: 12px;
  color: #596270;
  font-size: 31.500px;
  font-weight: 500;
}
.parse-icon { width: 32px; height: 32px; }
.hint { margin: 0; color: #5d636e; font-size: 28px; white-space: pre; }
.hint-code { height: 41px; margin-top: 11px; line-height: 41px; }
.path-code {
  display: inline-block;
  height: 41px;
  margin: 0 3px 0 0;
  padding: 0 13px;
  border-radius: 8px;
  background: #f6f6f9;
  color: #e6186f;
  font: 24.400px/41px "DejaVu Sans Mono", monospace;
  vertical-align: top;
}
.json-area {
  display: block;
  width: 100%;
  height: 234px;
  padding: 17px 32px 0;
  border: 2px solid #c5cbd6;
  border-radius: 16px;
  color: #212529;
  font: 33px/48.500px "DejaVu Sans Mono", monospace;
  overflow: hidden;
  resize: vertical;
  outline: none;
}
.hint-help { height: 40px; margin-top: 9px; line-height: 40px; }
.modal-foot { flex: none; padding: 0 40px 40px 0; display: flex; justify-content: flex-end; gap: 17px; }
.btn-cancel, .btn-save { height: 84px; border: 0; border-radius: 16px; font-size: 31.500px; font-weight: 700; }
.btn-cancel { width: 144px; background: #f5f6f8; color: #000; }
.btn-save {
  width: 249px;
  background: #3e3ab9;
  color: #fff;
  display: flex;
  align-items: center;
  justify-content: center;
  gap: 11px;
}
.save-icon { width: 28px; height: 28px; }
```
